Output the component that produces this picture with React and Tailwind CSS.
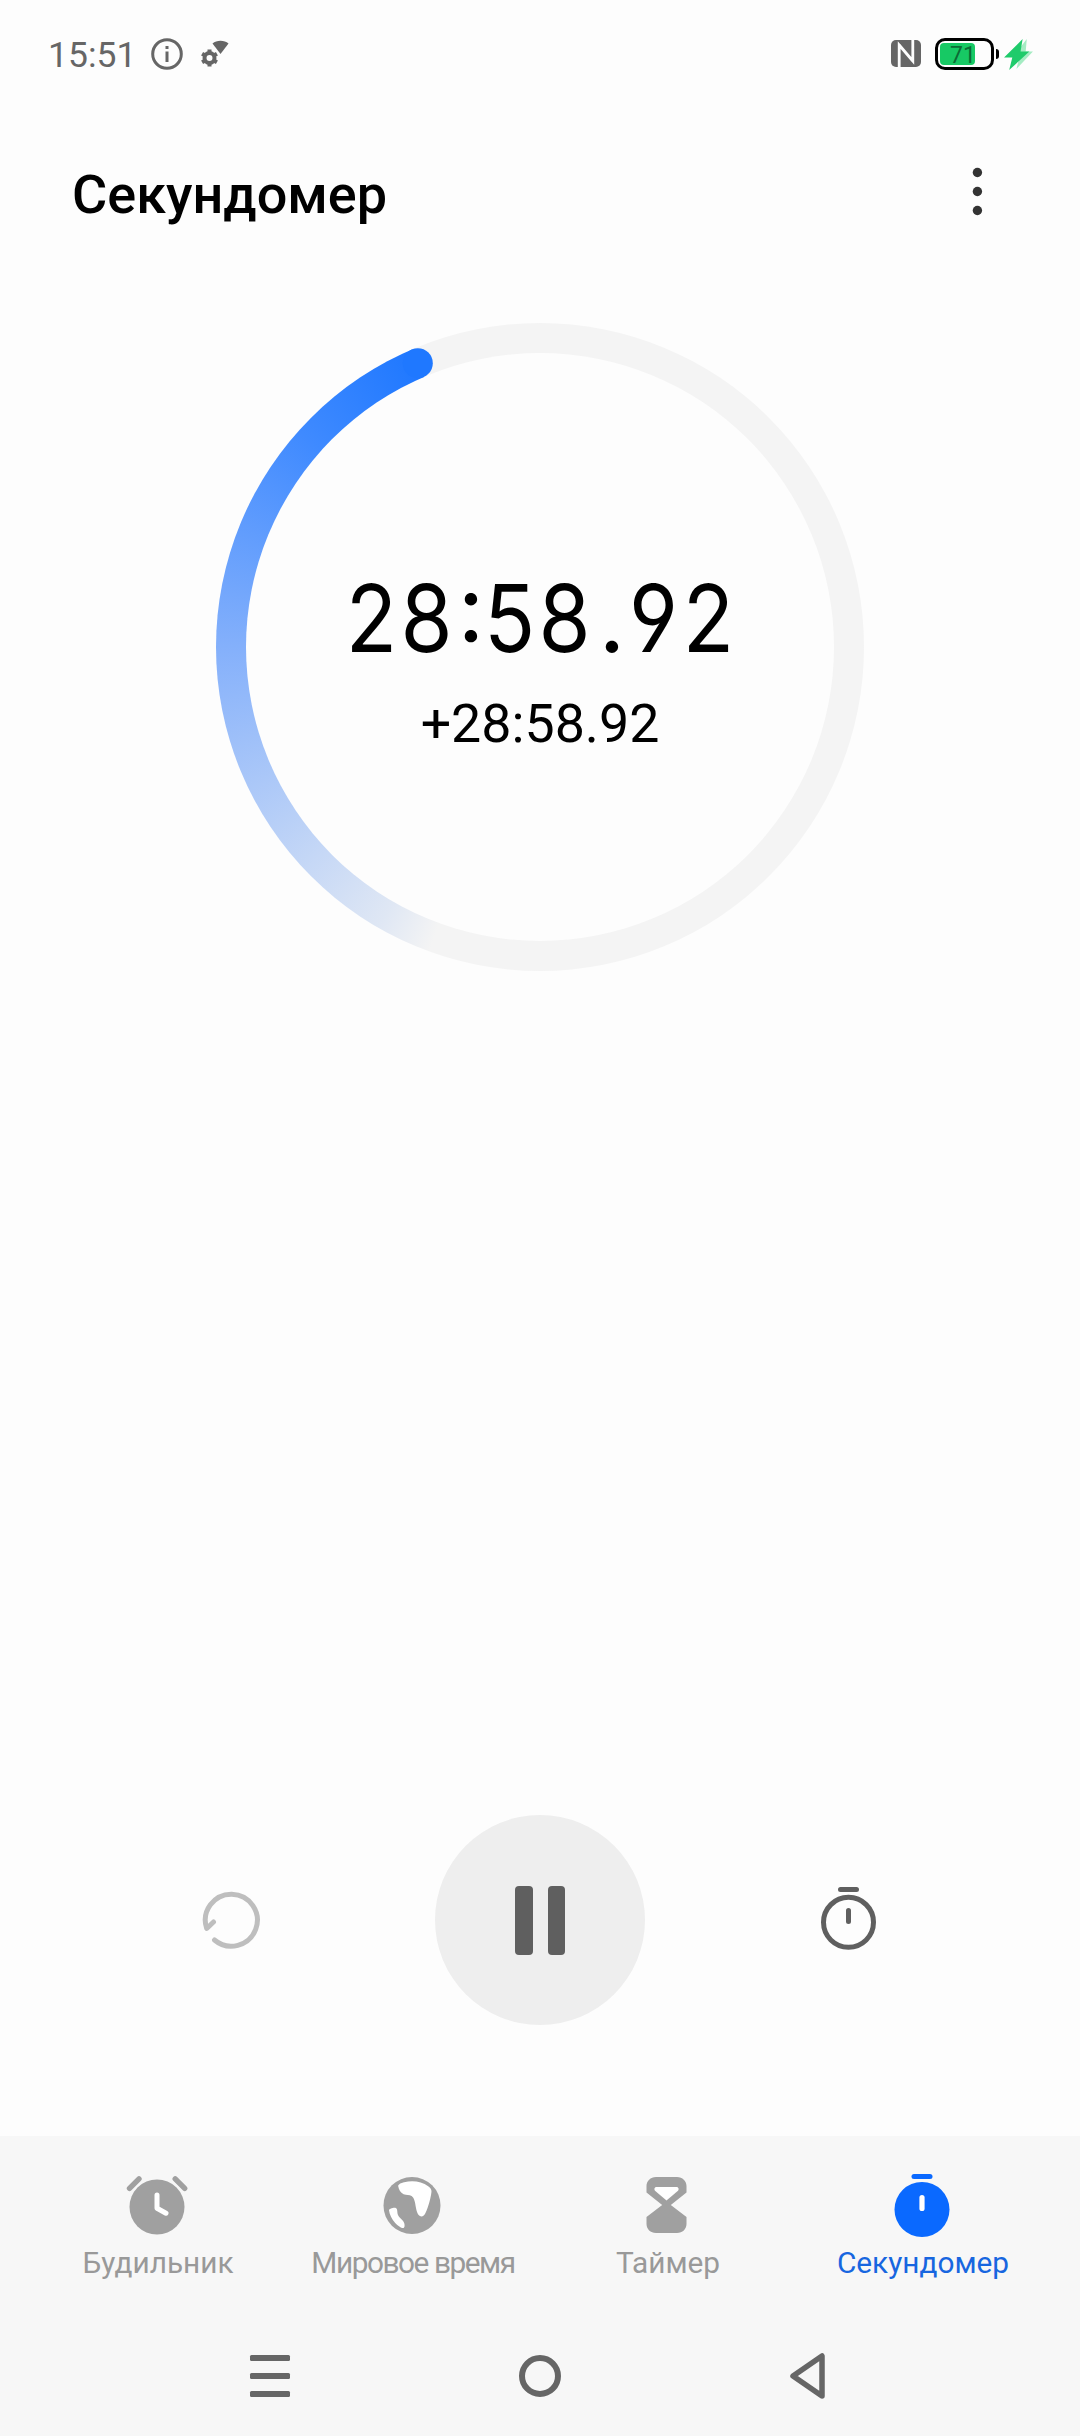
import clsx from 'clsx';

const tabs = [
  { id: 'alarm', label: 'Будильник', Icon: AlarmIcon },
  { id: 'world', label: 'Мировое время', Icon: GlobeIcon, tight: true },
  { id: 'timer', label: 'Таймер', Icon: HourglassIcon },
  { id: 'stopwatch', label: 'Секундомер', Icon: StopwatchSolidIcon },
];

function AlarmIcon() {
  return (
    <svg className="h-[72px] w-[72px]" viewBox="0 0 72 72" fill="none">
      <circle cx="36" cy="38" r="27.5" fill="#a0a0a0" />
      <path d="M8.5 19.3 18 9.8M54.2 9.8l9.5 9.5" stroke="#a0a0a0" strokeWidth="5.4" strokeLinecap="round" />
      <path d="M36 26v13.2l9 5" stroke="#fff" strokeWidth="5" strokeLinecap="round" strokeLinejoin="round" />
    </svg>
  );
}

function GlobeIcon() {
  return (
    <svg className="h-[72px] w-[72px]" viewBox="0 0 72 72">
      <circle cx="36" cy="36.5" r="28.5" fill="#a0a0a0" />
      <path
        d="M22.2 17.2c-.4-1.6 3-3.2 6-3.9 8.5-2.2 17.5-.8 24 3.9 2.3 1.7 3.5 3.3 3.3 5.5-.4 4-1.8 10-3.8 15.8-1.7 5-3.5 9-6 9-3.2 0-5-4-5.8-9-.7-4.5-1.3-9.5-4.3-11.6-2.4-1.7-5-.3-8-1.7-3.2-1.5-4.7-4.5-5.4-8z"
        fill="#fff"
      />
      <path
        d="M13 41.3c0-1.3 4.6-3 6.8-2.3 2 .8 1.2 4.5 2.2 7 1.4 3.5 5.7 5 6.4 8.8.4 2.3.2 3.6-.8 4.2-1.6.6-5.6-2-8.4-5-3.4-3.7-5.7-8.5-6.2-12.7z"
        fill="#fff"
      />
    </svg>
  );
}

function HourglassIcon() {
  return (
    <svg className="h-[72px] w-[72px]" viewBox="0 0 72 72">
      <path
        d="M25 8h21c5.5 0 9.5 4 9.5 9v6.5L39.8 36 55.5 48v7c0 5-4 9-9.5 9H25c-5.5 0-9.5-4-9.5-9v-7L31.2 36 15.500 23.5V17c0-5 4-9 9.5-9z"
        fill="#a0a0a0"
      />
      <path d="M25.5 18h20c2.2 0 2.800 2.600 1.200 4L35.500 31.500 24.300 22c-1.600-1.400-1-4 1.200-4z" fill="#fff" />
    </svg>
  );
}

function StopwatchSolidIcon() {
  return (
    <svg className="h-[72px] w-[72px]" viewBox="0 0 72 72">
      <circle cx="36" cy="40.5" r="27.5" fill="#0a69ff" />
      <rect x="25.5" y="5" width="21" height="5" rx="2.5" fill="#0a69ff" />
      <rect x="33.4" y="26" width="5.2" height="16" rx="2.6" fill="#fff" />
    </svg>
  );
}

function StatusBar() {
  return (
    <header className="flex h-[108px] items-center pr-[47px] pl-[48px]">
      <span className="pt-[3px] text-[35.5px] leading-none text-[#666]">15:51</span>
      <svg className="ml-[15px] h-8 w-8" viewBox="0 0 32 32" fill="none" stroke="#666" strokeWidth="3">
        <circle cx="16" cy="16" r="14.3" />
        <path d="M16 13.5v10.5M16 8v3" />
      </svg>
      <svg className="ml-[18px] h-7 w-7" viewBox="0 0 28 28">
        <path d="M11.5 3.5C15.5-.3 23.5-.3 27.5 3.5L19.5 14z" fill="#666" />
        <circle cx="8.5" cy="18" r="5" fill="none" stroke="#666" strokeWidth="4" />
        <path
          d="M8.5 9.5v4M8.5 22.5v4M1.1 13.8l3.5 2M12.4 20.3l3.5 2M1.1 22.3l3.5-2M12.4 15.8l3.5-2"
          stroke="#666"
          strokeWidth="4"
        />
      </svg>
      <div className="ml-auto flex items-center">
        <svg className="h-7 w-[30px]" viewBox="0 0 30 28">
          <rect width="30" height="27" rx="5" fill="#666" />
          <path d="M8.2 27V5l13.6 16M21.8 0v21L8.2 5" fill="none" stroke="#fdfdfd" strokeWidth="2.8" />
        </svg>
        <div className="relative ml-[14px] flex h-8 w-[59px] items-center rounded-[10px] border-[3.5px] border-black p-0.5">
          <div className="h-[22px] w-[35px] rounded-[4px] bg-[#17c964]" />
          <span className="absolute top-[3px] left-[12px] text-[23px] leading-none text-[#0c6b35]">71</span>
        </div>
        <div className="ml-0.5 h-2.5 w-[3px] rounded-r bg-black" />
        <svg className="ml-[5px] h-[31px] w-[29px]" viewBox="0 0 28 30">
          <path d="M22 0 9 17h6l-3 12L28 12h-7z" fill="#a5ecc3" />
          <path d="M18 0 0 18h8L5 30 24.5 12H16z" fill="#1fcb6b" />
        </svg>
      </div>
    </header>
  );
}

function BigTime({ value }) {
  return (
    <div className="flex font-[Inter,sans-serif] text-[93.5px] leading-[112px] [font-feature-settings:'ss01','cv03','cv04','case']">
      {value.split('').map((ch, i) => (
        <span
          key={i}
          className={clsx(
            'flex justify-center',
            ch === ':' && 'w-[28px] pl-[6px]',
            ch === '.' && 'w-[34px] pl-[6px]',
            ch !== ':' && ch !== '.' && 'w-[55px] scale-x-[0.9]'
          )}
        >
          {ch}
        </span>
      ))}
    </div>
  );
}

function Dial() {
  return (
    <section className="relative mx-auto mt-[46px] h-[648px] w-[648px] rounded-full bg-[conic-gradient(#f4f4f4_0deg,#f4f4f4_200deg,#dfe7f4_210deg,#84b0fb_270deg,#3f8aff_312deg,#1f78ff_336.7deg,#f4f4f4_336.7deg)] p-[30px]">
      <svg className="absolute inset-0" viewBox="0 0 648 648">
        <circle cx="201.8" cy="40.2" r="15" fill="#1f78ff" />
      </svg>
      <div className="flex h-full w-full flex-col items-center rounded-full bg-[#fdfdfd] pt-[209px] text-black">
        <BigTime value="28:58.92" />
        <div className="mt-[18px] text-[53.7px] leading-[64px]">+28:58.92</div>
      </div>
    </section>
  );
}

export default function App() {
  const active = 'stopwatch';

  return (
    <div className="flex h-[2436px] w-[1080px] flex-col bg-[#fdfdfd] font-[Roboto,sans-serif]">
      <StatusBar />

      <div className="flex h-[169px] items-start justify-between pt-[55px] pr-[92px] pl-[72px]">
        <h1 className="text-[54px] leading-[64px] font-medium text-black">Секундомер</h1>
        <svg className="mt-1 h-[50px] w-[22px]" viewBox="0 0 22 50" fill="#333">
          <circle cx="11.4" cy="5.5" r="4.7" />
          <circle cx="11.4" cy="24.5" r="4.7" />
          <circle cx="11.4" cy="43.5" r="4.7" />
        </svg>
      </div>

      <Dial />

      <div className="mt-auto flex h-[210px] items-center justify-between px-[196px]">
        <button className="h-[72px] w-[72px]">
          <svg viewBox="0 0 72 72" fill="none" stroke="#bebebe" strokeWidth="5" strokeLinecap="round" strokeLinejoin="round">
            <path d="M18.5 56A26 26 0 1 0 10.7 44.5L17.5 38" />
          </svg>
        </button>
        <button className="flex h-[210px] w-[210px] items-center justify-center gap-[15px] rounded-full bg-[#eee]">
          <span className="h-[69px] w-[17.5px] rounded-[4px] bg-[#5f5f5f]" />
          <span className="h-[69px] w-[17.5px] rounded-[4px] bg-[#5f5f5f]" />
        </button>
        <button className="h-[72px] w-[72px]">
          <svg viewBox="0 0 72 72" fill="none" stroke="#5f5f5f" strokeWidth="5" strokeLinecap="round">
            <circle cx="36.5" cy="38.3" r="25" />
            <path d="M28.5 5.5h16M36.5 26.5v11" />
          </svg>
        </button>
      </div>

      <footer className="mt-[111px] h-[300px] bg-[#f7f7f7]">
        <nav className="flex pt-[33px] pl-[29px]">
          {tabs.map(({ id, label, Icon, tight }) => (
            <button key={id} className="flex w-[255px] flex-col items-center">
              <Icon />
              <span
                className={clsx(
                  'mt-[4px] pl-[3px] text-[29.8px] leading-[36px] whitespace-nowrap',
                  tight && 'tracking-[-1.45px]',
                  id === active ? 'text-[#1766e0]' : 'text-[#999]'
                )}
              >
                {label}
              </span>
            </button>
          ))}
        </nav>

        <div className="mt-[65px] flex items-center justify-between px-[240px]">
          <svg className="h-[60px] w-[60px]" viewBox="0 0 60 60" fill="#666">
            <rect x="10" y="9" width="40" height="6" rx="1.5" />
            <rect x="10" y="27" width="40" height="6" rx="1.5" />
            <rect x="10" y="45" width="40" height="6" rx="1.5" />
          </svg>
          <svg className="h-[60px] w-[60px]" viewBox="0 0 60 60" fill="none">
            <circle cx="30" cy="30" r="18" stroke="#666" strokeWidth="6" />
          </svg>
          <svg className="h-[60px] w-[60px]" viewBox="0 0 60 60" fill="none">
            <path d="M42 10v40L13 30z" stroke="#666" strokeWidth="5.5" strokeLinejoin="round" />
          </svg>
        </div>
      </footer>
    </div>
  );
}
